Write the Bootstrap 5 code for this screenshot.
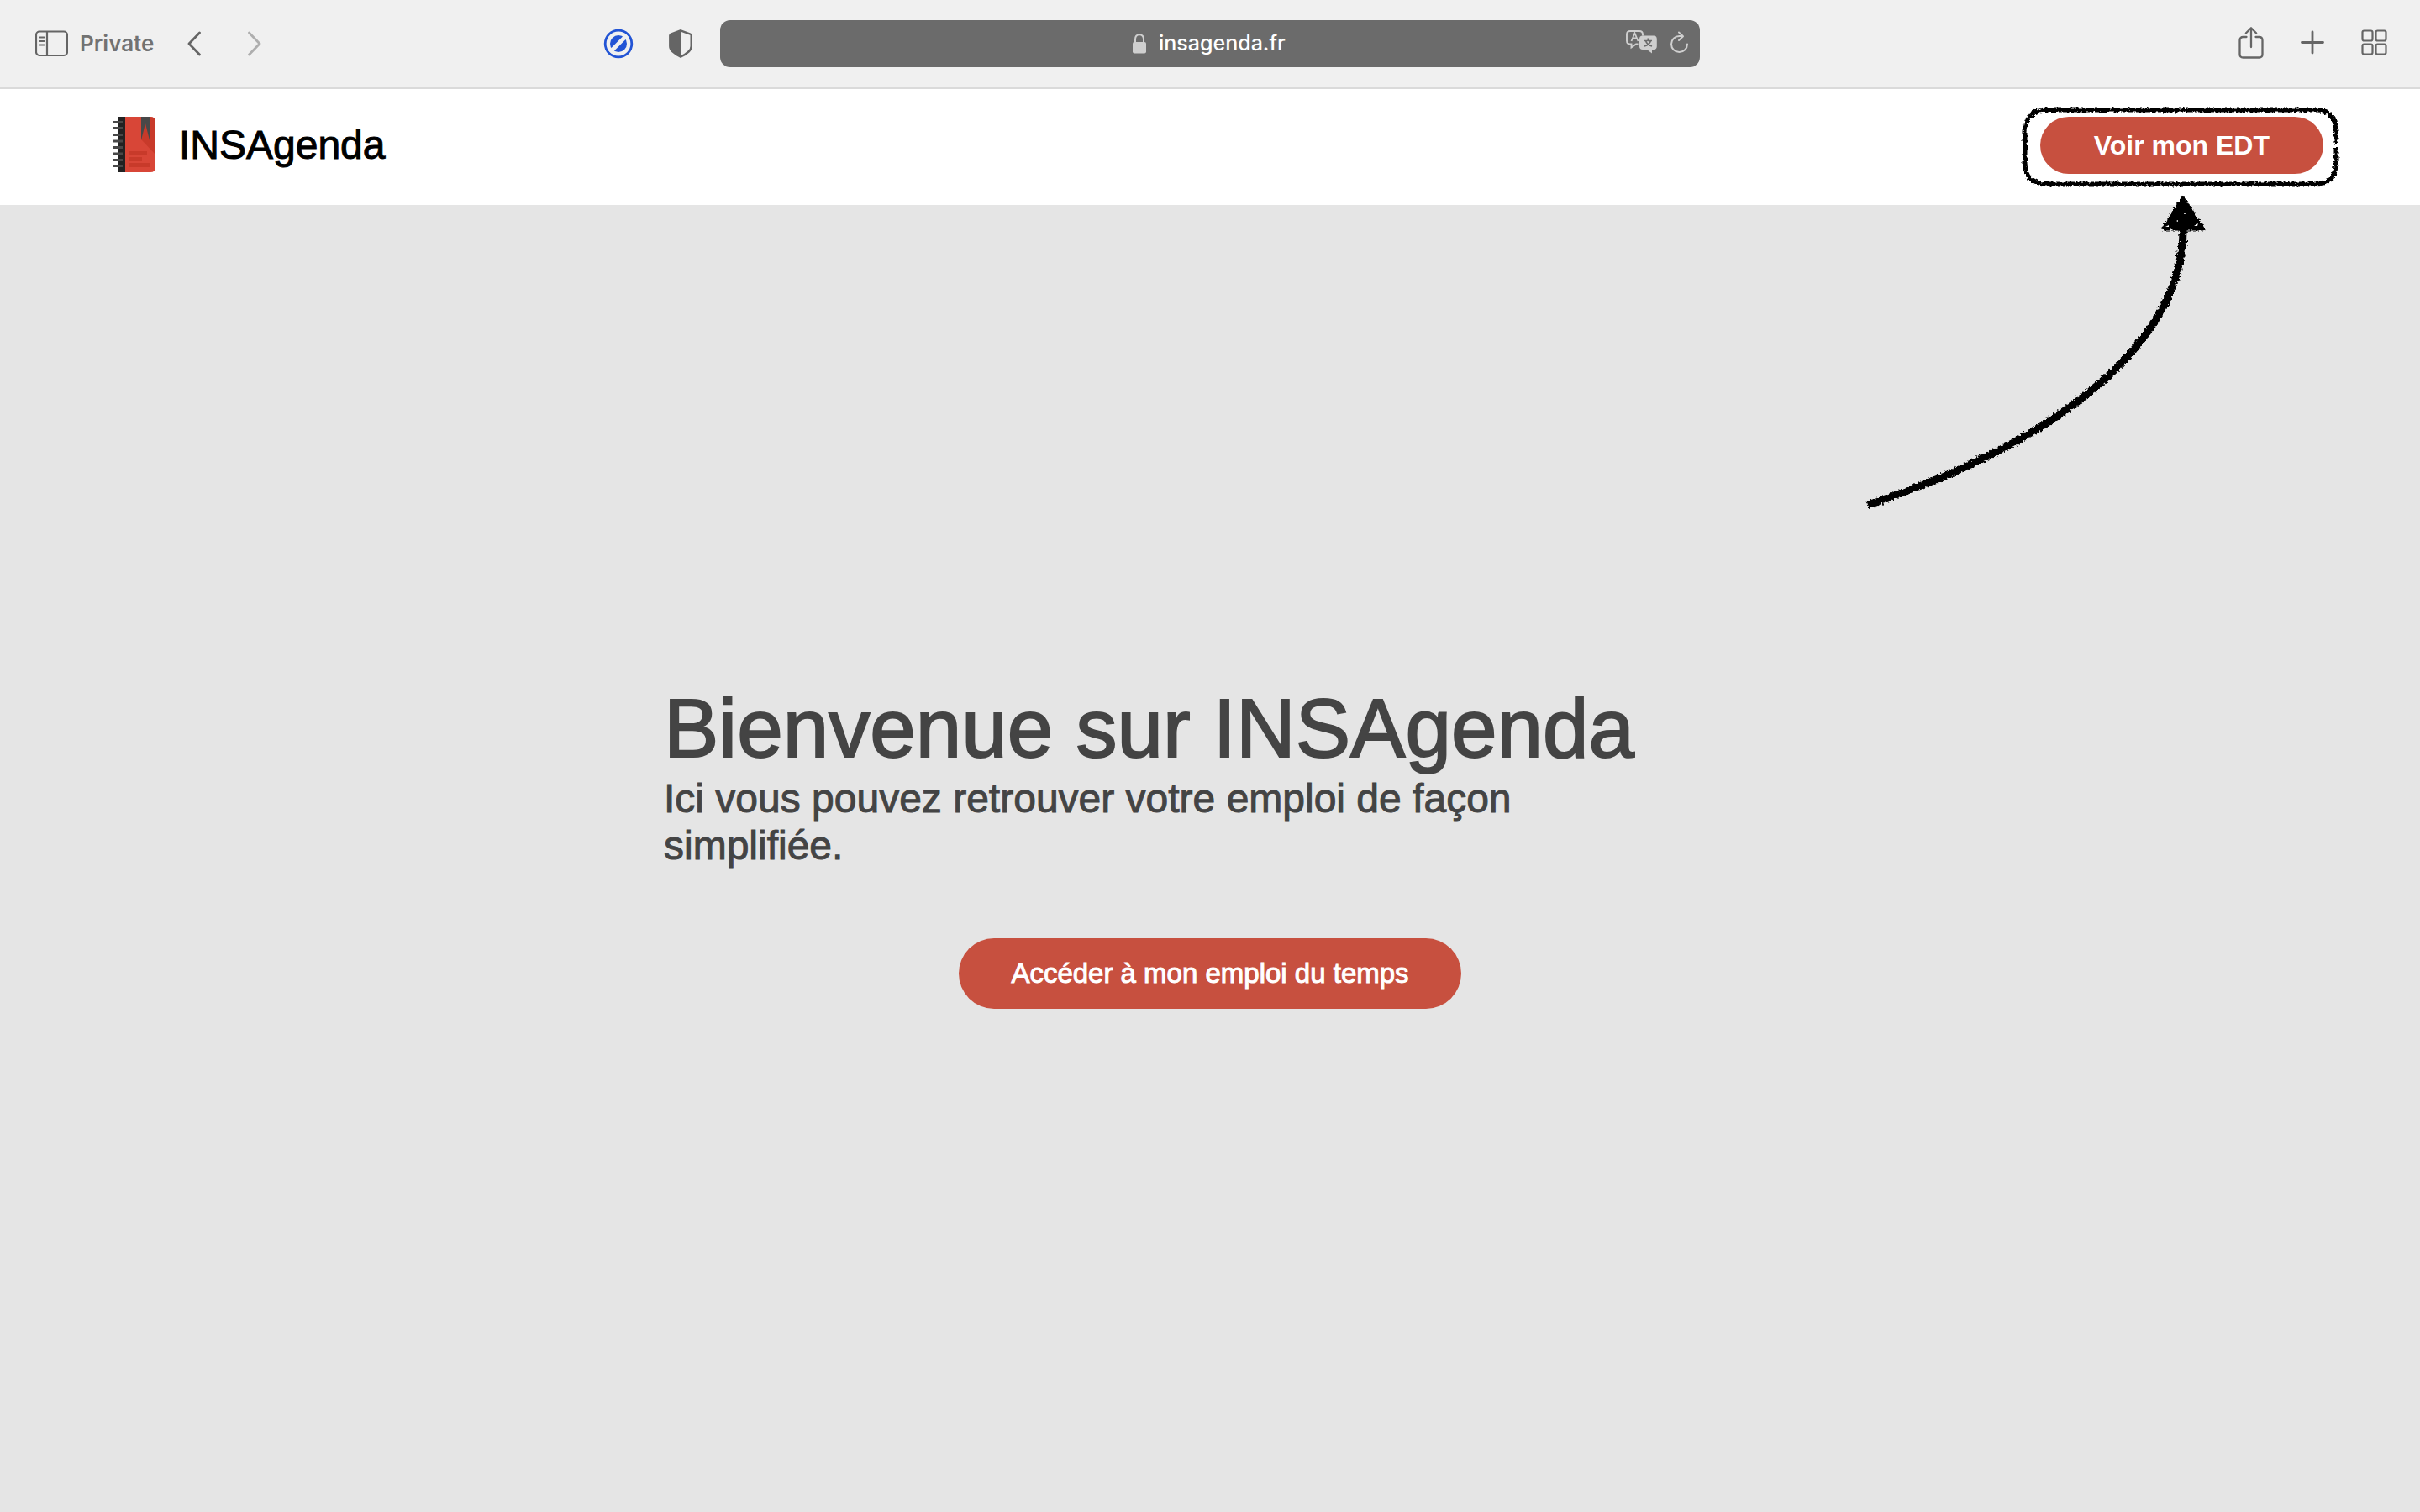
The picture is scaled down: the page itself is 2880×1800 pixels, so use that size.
<!DOCTYPE html>
<html lang="fr">
<head>
<meta charset="utf-8">
<meta name="viewport" content="width=device-width, initial-scale=1">
<title>INSAgenda</title>
<link rel="stylesheet" href="https://cdn.jsdelivr.net/npm/bootstrap@5.3.0/dist/css/bootstrap.min.css">
<style>
  body { font-family: "Liberation Sans", Arial, sans-serif; background: #e5e5e5; color: #444; overflow-x: hidden; }
  svg { display: block; flex: none; }
  .toolbar { display: grid; grid-template-columns: 1fr minmax(0, 1166px) 1fr; height: 106px; background: #f0f0f0; border-bottom: 2px solid #dadada; font-family: Inter, sans-serif; color: #656565; }
  .tool { padding: 0; border: 0; background: none; color: inherit; }
  .tool-off { color: #aeaeae; }
  .tools-left { padding: 0 33px 0 42px; }
  .tools-right { padding-right: 39px; gap: 44px; }
  .tools-ext { gap: 42px; }
  .history { margin-left: 40px; gap: 56px; }
  .private-label { margin-left: 14px; font-size: 26px; font-weight: 600; line-height: 32px; color: #727272; }
  .address { display: grid; grid-template-columns: 1fr auto 1fr; height: 56px; border-radius: 12px; background: #6b6b6b; color: #cfcfcf; padding: 0 14px; }
  .address-text { gap: 12px; }
  .address input { width: 156px; padding: 0 0 2px 3px; border: 0; background: none; color: #fff; font-size: 25px; font-weight: 500; line-height: 32px; }
  .site-nav { height: 138px; padding: 0 115px 4px 134px; }
  .brand-link { gap: 28px; }
  .site-name { font-size: 48px; line-height: 56px; color: #000; -webkit-text-stroke: 1px #000; }
  .btn-brick { --bs-btn-color: #fff; --bs-btn-bg: #c7503f; --bs-btn-border-width: 0; --bs-btn-hover-color: #fff; --bs-btn-hover-bg: #ae4436; --bs-btn-line-height: 36px; }
  .btn-edt { padding: 16px 64px; font-size: 32px; font-weight: 700; }
  .btn-main { padding: 24px 62px; font-size: 33px; -webkit-text-stroke: 1px #fff; }
  .sketch { position: absolute; left: -228px; top: -38px; pointer-events: none; }
  .hero { min-height: calc(100vh - 244px); padding-bottom: 32px; }
  .hero-inner { width: 100%; max-width: 1300px; }
  .hero h1 { font-size: 98px; line-height: 112px; font-weight: 400; -webkit-text-stroke: 2px #444; }
  .hero p { max-width: 1160px; margin-bottom: 82px; font-size: 48px; line-height: 56px; -webkit-text-stroke: 1px #444; }
</style>
</head>
<body>
<header class="toolbar align-items-center">
  <div class="tools-left d-flex align-items-center justify-content-between">
    <div class="d-flex align-items-center">
      <button class="tool" aria-label="Barre latérale"><svg width="39" height="32" fill="none" stroke="currentColor" stroke-width="2.200"><rect x="1" y="1.500" width="37" height="28.500" rx="4"/><path d="M14 2v28M5.500 8.500h5M5.500 13h5M5.500 17.500h5" stroke-linecap="round"/></svg></button>
      <span class="private-label">Private</span>
      <div class="history d-flex">
        <button class="tool" aria-label="Précédent"><svg width="16" height="30" fill="none" stroke="currentColor" stroke-width="2.800" stroke-linecap="round" stroke-linejoin="round"><path d="M14.500 2L2 15l12.500 13"/></svg></button>
        <button class="tool tool-off" aria-label="Suivant"><svg width="16" height="30" fill="none" stroke="currentColor" stroke-width="2.800" stroke-linecap="round" stroke-linejoin="round"><path d="M1.500 2L14 15 1.500 28"/></svg></button>
      </div>
    </div>
    <div class="tools-ext d-flex align-items-center">
      <button class="tool" aria-label="Bloqueur"><svg width="36" height="36" viewBox="0 0 36 36"><circle cx="18" cy="18" r="15.800" fill="none" stroke="#2254d5" stroke-width="2.800"/><circle cx="18" cy="18" r="10" fill="#2254d5"/><path d="M8 28L28 8" stroke="#f0f0f0" stroke-width="5"/></svg></button>
      <button class="tool" aria-label="Confidentialité"><svg width="28" height="34" viewBox="0 0 28 34"><path d="M14 1.300L25.500 5.500Q26.700 6 26.700 7.300V20Q26.700 23.500 23.500 26.500Q19.500 30.300 14 32.600Q8.500 30.300 4.500 26.500Q1.300 23.500 1.300 20V7.300Q1.300 6 2.500 5.500Z" fill="none" stroke="currentColor" stroke-width="2.400"/><path d="M14 1L2 5.500V22Q5 28.500 14 32.500Z" fill="currentColor"/></svg></button>
    </div>
  </div>
  <div class="address align-items-center">
    <span></span>
    <div class="address-text d-flex align-items-center">
      <svg width="16" height="24" viewBox="0 0 16 24"><rect y="10" width="16" height="13.500" rx="2" fill="currentColor"/><path d="M3 11V7Q3 1.200 8 1.200T13 7V11" fill="none" stroke="currentColor" stroke-width="2"/></svg>
      <input type="text" aria-label="Adresse" value="insagenda.fr">
    </div>
    <div class="d-flex align-items-center justify-content-end gap-3">
      <button class="tool" aria-label="Traduire"><svg width="37" height="32" viewBox="0 0 37 32"><path d="M14.500 16.500H12L6.500 20.500V16.500H5Q1 16.500 1 12.500V5Q1 1 5 1H16Q20 1 20 5V6.500" fill="none" stroke="currentColor" stroke-width="1.900"/><path d="M6.500 13L10.500 3.500 14.500 13M8 9.500h5" fill="none" stroke="currentColor" stroke-width="1.800"/><path d="M20 6.500H33Q36.800 6.500 36.800 10.500V19Q36.800 23 33 23H31V27.500L25 23H20Q16 23 16 19V10.500Q16 6.500 20 6.500Z" fill="currentColor"/><path d="M22 12.500H31M26.300 9.500v3M23.500 12.500Q25 17.500 31 19M29.500 12.500Q28 17.500 22 19" fill="none" stroke="#6b6b6b" stroke-width="1.700"/></svg></button>
      <button class="tool" aria-label="Recharger"><svg width="21" height="38" viewBox="0 0 21 38" fill="none" stroke="currentColor" stroke-width="2" stroke-linecap="round" stroke-linejoin="round"><path d="M20 19.500A9.500 9.500 0 1 1 10.500 10H14.500M10 5.500L15 10.200 10 15"/></svg></button>
    </div>
  </div>
  <div class="tools-right d-flex align-items-center justify-content-end">
    <button class="tool" aria-label="Partager"><svg width="30" height="44" viewBox="0 0 30 44" fill="none" stroke="currentColor" stroke-width="2.300" stroke-linecap="round" stroke-linejoin="round"><path d="M9.500 14H5.500Q1.500 14 1.500 18V34.500Q1.500 38.500 5.500 38.500H24.500Q28.500 38.500 28.500 34.500V18Q28.500 14 24.500 14H20.500M15 26V3.500M8.800 9.500L15 3.200 21.200 9.500"/></svg></button>
    <button class="tool" aria-label="Nouvel onglet"><svg width="28" height="34" viewBox="0 0 28 34" stroke="currentColor" stroke-width="2.800" stroke-linecap="round"><path d="M1.500 15.500h25M14 3v25"/></svg></button>
    <button class="tool" aria-label="Onglets"><svg width="31" height="34" viewBox="0 0 31 34" fill="none" stroke="currentColor" stroke-width="2.200"><rect x="1.500" y="1.500" width="12" height="12" rx="2"/><rect x="17.500" y="1.500" width="12" height="12" rx="2"/><rect x="1.500" y="17.500" width="12" height="12" rx="2"/><rect x="17.500" y="17.500" width="12" height="12" rx="2"/></svg></button>
  </div>
</header>

<nav class="site-nav d-flex align-items-center justify-content-between bg-white">
  <a href="#" class="brand-link d-flex align-items-center text-decoration-none">
    <svg width="51" height="68" viewBox="0 0 51 68">
      <path d="M14 0H45Q51 0 51 6V60Q51 66 45 66H14Z" fill="#d84637"/>
      <path d="M34 27L51 45V6Q51 0 45 0H34Z" fill="#c83a2a"/>
      <path d="M6 0H15V66H6Z" fill="#222"/>
      <path d="M34 0H44V28L39 8 34 28Z" fill="#484848"/>
      <path d="M20 41H41V46H20ZM20 48H35V53H20ZM20 55H45V60H20Z" fill="#c83a2a"/>
      <path d="M1 6.500H12M1 13.500H12M1 21.500H12M1 29H12M1 36.500H12M1 44H12M1 51.500H12M1 58.500H12" stroke="#484848" stroke-width="2.800"/>
    </svg>
    <span class="site-name">INSAgenda</span>
  </a>
  <div class="position-relative">
    <a href="#" class="btn btn-brick btn-edt rounded-pill d-block">Voir mon EDT</a>
    <svg class="sketch" width="620" height="520" viewBox="0 0 620 520" aria-hidden="true">
      <defs>
        <filter id="chalk" x="0" y="0" width="620" height="520" filterUnits="userSpaceOnUse">
          <feTurbulence type="fractalNoise" baseFrequency="0.35" numOctaves="2" seed="4" result="n"/>
          <feDisplacementMap in="SourceGraphic" in2="n" scale="6" xChannelSelector="R" yChannelSelector="G"/>
        </filter>
      </defs>
      <g filter="url(#chalk)" fill="none" stroke="#000">
        <path d="M580 71V54Q578 30 558 30H235Q210 30 210 57V93Q210 118 235 118H556Q580 118 580 94V75" stroke-width="5"/>
        <path d="M23 500C260 421 400 301 398 170" stroke-width="9"/>
        <path d="M398 135L375 171H421Z" fill="#000" stroke-width="5" stroke-linejoin="round"/>
      </g>
      <g fill="#fff"><circle cx="400" cy="153" r="1"/><path d="M377 169l4-2v2zM411 168l5-3-1 3zM390 162l2-1v2z"/></g>
    </svg>
  </div>
</nav>

<main class="hero d-flex align-items-center justify-content-center">
  <div class="hero-inner">
    <h1 class="mb-0">Bienvenue sur INSAgenda</h1>
    <p>Ici vous pouvez retrouver votre emploi de façon simplifiée.</p>
    <div class="text-center"><a href="#" class="btn btn-brick btn-main rounded-pill">Accéder à mon emploi du temps</a></div>
  </div>
</main>
<script src="https://cdn.jsdelivr.net/npm/bootstrap@5.3.0/dist/js/bootstrap.bundle.min.js"></script>
</body>
</html>
